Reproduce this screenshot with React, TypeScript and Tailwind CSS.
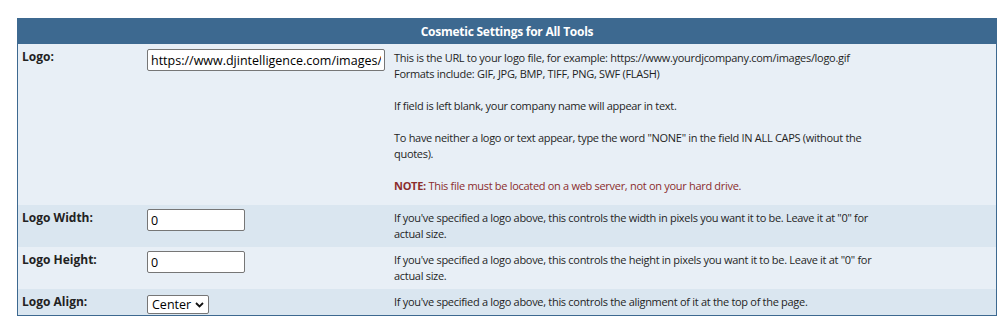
import React from 'react';

const rowBase = 'grid grid-cols-[125px_247px_500px_1fr] text-[#222]';

function Row({
  label,
  bg,
  control,
  descPad = 'py-[5px]',
  ctlPad = 'pt-[4px]',
  children,
}: {
  label: string;
  bg: string;
  control: React.ReactNode;
  descPad?: string;
  ctlPad?: string;
  children: React.ReactNode;
}) {
  return (
    <div className={`${rowBase} ${bg}`}>
      <div className="px-[4px] py-[5px] font-bold text-[12px]">{label}</div>
      <div className={`px-[4px] ${ctlPad}`}>{control}</div>
      <div className={`px-[4px] ${descPad} text-[11px] tracking-[-0.3px] text-[#1f1f1f]`}>{children}</div>
      <div />
    </div>
  );
}

const inputCls =
  'h-[22px] border border-[#767676] rounded-[2px] bg-white px-[3px] text-[12.5px] text-black outline-none font-[inherit]';

export default function App() {
  return (
    <div className="min-h-screen bg-white pt-[18px] pl-[17px] font-['Open_Sans',sans-serif] text-[12px] leading-[16px]">
      <div className="w-[980px] border border-[#3d6990]">
        {/* Title Header */}
        <div className="h-[25px] bg-[#3d6990] text-white font-bold tracking-[-0.25px] flex items-center justify-center">
          Cosmetic Settings for All Tools
        </div>

        <Row
          label="Logo:"
          bg="bg-[#e8eff6]"
          descPad="pt-[6px] pb-[11px]"
          ctlPad="pt-[5px]"
          control={
            <input readOnly value="https://www.djintelligence.com/images/logo.gif" className={`${inputCls} w-[238px]`} />
          }
        >
          This is the URL to your logo file, for example: https://www.yourdjcompany.com/images/logo.gif
          <br />
          Formats include: GIF, JPG, BMP, TIFF, PNG, SWF (FLASH)
          <br />
          <br />
          If field is left blank, your company name will appear in text.
          <br />
          <br />
          To have neither a logo or text appear, type the word "NONE" in the field IN ALL CAPS (without the quotes).
          <br />
          <br />
          <span className="text-[#8b2d2d]">
            <b>NOTE:</b> This file must be located on a web server, not on your hard drive.
          </span>
        </Row>

        <Row
          label="Logo Width:"
          bg="bg-[#dae6f0]"
          control={<input readOnly value="0" className={`${inputCls} w-[98px]`} />}
        >
          If you've specified a logo above, this controls the width in pixels you want it to be. Leave it at "0" for actual size.
        </Row>

        <Row
          label="Logo Height:"
          bg="bg-[#e8eff6]"
          control={<input readOnly value="0" className={`${inputCls} w-[98px]`} />}
        >
          If you've specified a logo above, this controls the height in pixels you want it to be. Leave it at "0" for actual size.
        </Row>

        <Row
          label="Logo Align:"
          bg="bg-[#dae6f0]"
          control={
            <div className="w-[62px] h-[19px] mt-[2px] border border-[#767676] rounded-[2px] bg-white flex items-center justify-between pl-[4px] pr-[4px] text-[12.5px] text-black">
              <span>Center</span>
              <svg width="9" height="6" viewBox="0 0 9 6" fill="none">
                <path d="M1 1l3.5 3.5L8 1" stroke="#111" strokeWidth="1.8" />
              </svg>
            </div>
          }
        >
          If you've specified a logo above, this controls the alignment of it at the top of the page.
        </Row>
      </div>
    </div>
  );
}
